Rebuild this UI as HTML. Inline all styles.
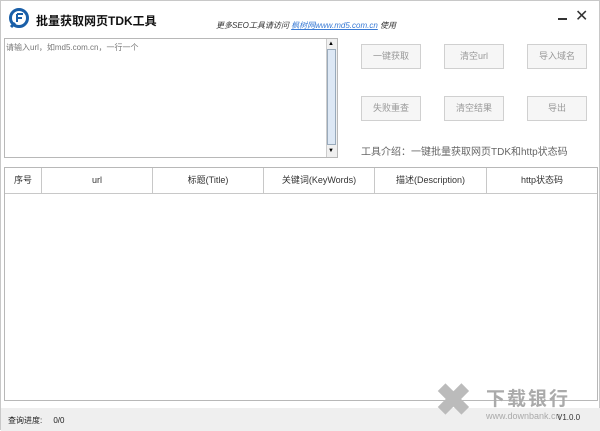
<!DOCTYPE html>
<html><head><meta charset="utf-8"><style>
*{margin:0;padding:0;box-sizing:border-box}
body{width:600px;height:430px;background:#fff;font-family:"Liberation Sans","Noto Sans CJK SC",sans-serif;position:relative;overflow:hidden;border:1px solid #c8c8c8}
.a{position:absolute}
.btn{position:absolute;width:60px;height:25px;border:1px solid #d0d0d0;background:#f6f6f6;color:#999;font-size:9px;text-align:center;line-height:23px}
.th{position:absolute;top:0;height:25px;line-height:25px;text-align:center;font-size:9px;color:#333;border-right:1px solid #c8c8c8}
</style></head><body>
<svg class="a" style="left:7px;top:6px" width="22" height="22" viewBox="0 0 22 22"><circle cx="11" cy="11" r="8.5" fill="none" stroke="#1a5fa8" stroke-width="3"/><path d="M3 20 L7 16" stroke="#1a5fa8" stroke-width="3"/><path d="M9 7h6M8 11h6M9 7v8" stroke="#1a5fa8" stroke-width="2"/></svg>
<div class="a" style="left:35px;top:11px;font-size:12px;font-weight:bold;color:#111">批量获取网页TDK工具</div>
<div class="a" style="left:215px;top:19px;font-size:8px;font-style:italic;color:#333">更多SEO工具请访问 <span style="color:#3a7bd5;text-decoration:underline">枫树网www.md5.com.cn</span> 使用</div>
<div class="a" style="left:557px;top:17px;width:9px;height:2px;background:#333"></div>
<div class="a" style="left:574px;top:5px;font-size:16px;color:#333">✕</div>
<div class="a" style="left:3px;top:37px;width:334px;height:120px;border:1px solid #b8b8b8"></div>
<div class="a" style="left:5px;top:41px;font-size:8px;color:#777">请输入url，如md5.com.cn，一行一个</div>
<div class="a" style="left:325px;top:38px;width:11px;height:118px;background:#f0f0f0;border-left:1px solid #ccc"></div>
<div class="a" style="left:326px;top:48px;width:9px;height:96px;background:#dde8f5;border:1px solid #9ab"></div>
<div class="a" style="left:327px;top:40px;font-size:6px">▲</div>
<div class="a" style="left:327px;top:147px;font-size:6px">▼</div>
<div class="btn" style="left:360px;top:43px">一键获取</div>
<div class="btn" style="left:443px;top:43px">清空url</div>
<div class="btn" style="left:526px;top:43px">导入域名</div>
<div class="btn" style="left:360px;top:95px">失败重查</div>
<div class="btn" style="left:443px;top:95px">清空结果</div>
<div class="btn" style="left:526px;top:95px">导出</div>
<div class="a" style="left:360px;top:142px;font-size:10px;color:#666">工具介绍：一键批量获取网页TDK和http状态码</div>
<div class="a" style="left:3px;top:166px;width:594px;height:234px;border:1px solid #b8b8b8">
<div class="a" style="left:0;top:0;width:592px;height:26px;border-bottom:1px solid #c8c8c8"></div>
<div class="th" style="left:0;width:37px">序号</div>
<div class="th" style="left:37px;width:111px">url</div>
<div class="th" style="left:148px;width:111px">标题(Title)</div>
<div class="th" style="left:259px;width:111px">关键词(KeyWords)</div>
<div class="th" style="left:370px;width:112px">描述(Description)</div>
<div class="th" style="left:482px;width:110px;border-right:none">http状态码</div>
</div>
<div class="a" style="left:0;top:407px;width:600px;height:23px;background:#efefef"></div>
<div class="a" style="left:7px;top:414px;font-size:8px;color:#222">查询进度: &nbsp;&nbsp;&nbsp;&nbsp;0/0</div>
<div class="a" style="left:434px;top:374px;font-size:44px;color:#bbb;font-weight:bold">✖</div>
<div class="a" style="left:485px;top:383px;font-size:19px;color:#aaa;font-weight:bold;letter-spacing:2px">下载银行</div>
<div class="a" style="left:485px;top:410px;font-size:9px;color:#aaa">www.downbank.cn</div>
<div class="a" style="left:556px;top:412px;font-size:8px;color:#333">V1.0.0</div>
</body></html>
